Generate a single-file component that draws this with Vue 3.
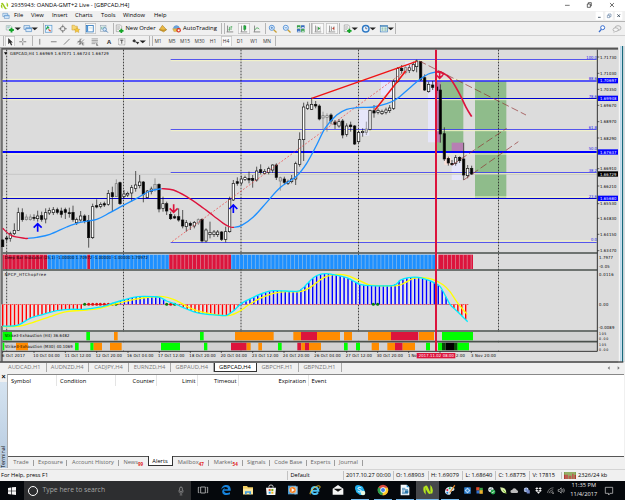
<script setup>
/* ---------- helpers ---------- */
// Turns centre positions into flow margins: [name, centre, width, pressed]
const lay = (items, start = 0) => {
  let end = start
  return items.map(([k, c, w, on]) => {
    const m = c - w / 2 - end
    end = c + w / 2
    return { k, on, style: { marginLeft: m + 'px', width: w + 'px' } }
  })
}
// Turns start positions into cell widths
const cells = (items, last) =>
  items.map(([t, x, extra], i) => ({ t, extra, w: (i + 1 < items.length ? items[i + 1][1] : last) - x + 'px' }))

const smooth = (p) => {
  let d = `M${p[0]},${p[1]}`
  const n = p.length / 2
  const g = (i) => { const j = Math.max(0, Math.min(n - 1, i)); return [p[2 * j], p[2 * j + 1]] }
  for (let i = 0; i < n - 1; i++) {
    const [a, b, c, e] = [g(i - 1), g(i), g(i + 1), g(i + 2)]
    d += `C${b[0] + (c[0] - a[0]) / 6},${b[1] + (c[1] - a[1]) / 6} ${c[0] - (e[0] - b[0]) / 6},${c[1] - (e[1] - b[1]) / 6} ${c[0]},${c[1]}`
  }
  return d
}

/* ---------- icons (30 x 30 box) ---------- */
const I = {
  doc: '<path d="M4 5h14l3 3v11H4z" fill="#eef4ee" stroke="#7a9a9a" stroke-width="1.5"/><path d="M7 9h9M7 12h7" stroke="#59a" stroke-width="1.5"/><path d="M13 19h15M20.500 12v15" stroke="#15a52a" stroke-width="6"/>',
  wins: '<path d="M3 5h18v12H3z" fill="#dcecfb" stroke="#4d86c0" stroke-width="2"/><path d="M9 12h18v12H9z" fill="#dcecfb" stroke="#4d86c0" stroke-width="2"/><path d="M9 12h18v4H9z" fill="#6ea3d8"/>',
  market: '<rect x="4" y="4" width="21" height="22" fill="#eaf3ff" stroke="#4990c8" stroke-width="2"/><path d="M7 17l5-8 4 5" stroke="#22a34a" stroke-width="4" fill="none"/><path d="M14 17l7 6" stroke="#d9542e" stroke-width="4"/>',
  target: '<circle cx="15" cy="15" r="7.500" fill="none" stroke="#555" stroke-width="2"/><path d="M15 2v9M15 19v9M2 15h9M19 15h9" stroke="#555" stroke-width="2"/>',
  folder: '<path d="M3 4h8l2 3h7v12H3z" fill="#f7d774" stroke="#c89a28" stroke-width="1.500"/><path d="M19 11l3 5 6 1-4 4 1 6-6-3-6 3 1-6-4-4 6-1z" fill="#f5c63c" stroke="#b98a1a"/>',
  panel: '<rect x="4" y="5" width="22" height="20" fill="#fff" stroke="#2772b8" stroke-width="2.500"/><path d="M5 6h5v18H5z" fill="#4b91d4"/><path d="M13 11h10M13 15h10" stroke="#9bb" />',
  tester: '<rect x="4" y="4" width="18" height="20" fill="#e9eff6" stroke="#8898a8" stroke-width="1.500"/><path d="M8 17V9M13 19V8M18 14V8" stroke="#5a8" stroke-width="2"/><circle cx="18" cy="17" r="5.500" fill="#d6e8fa" stroke="#457bb5" stroke-width="2"/><path d="M22 21l6 6" stroke="#457bb5" stroke-width="3"/>',
  order: '<path d="M4 3h13l4 4v17H4z" fill="#f3f3f3" stroke="#777" stroke-width="1.500"/><path d="M7 9h9M7 13h9M7 17h6" stroke="#888" stroke-width="1.500"/><path d="M13 22h14M20 15v14" stroke="#12a526" stroke-width="5.500"/>',
  gold: '<path d="M4 18L14 4l13 14-9 7z" fill="#e9b944" stroke="#9c6c12" stroke-width="1.500"/><path d="M4 18l12 2 11-2" stroke="#9c6c12" stroke-width="2" fill="none"/>',
  auto: '<path d="M4 14q2-9 10-9t10 9z" fill="#6aa6e0" stroke="#3a71a8"/><path d="M2 15h24l-4 9H6z" fill="#e8c04d" stroke="#a58020"/><circle cx="21" cy="20" r="7" fill="#d92b1c"/><rect x="18" y="17" width="6" height="6" fill="#fff"/>',
  bars: '<path d="M8 5v19M5 25h21" stroke="#444" stroke-width="1.800" fill="none"/><path d="M14 9v12M11 18h3M19 7v12M19 9h4" stroke="#2a9c3c" stroke-width="2.200" fill="none"/>',
  candle: '<path d="M8 5v19M5 25h21" stroke="#444" stroke-width="1.800"/><path d="M18 3v19" stroke="#146a22" stroke-width="2"/><rect x="15" y="6" width="7" height="11" fill="#1fae3d" stroke="#146a22"/>',
  linec: '<path d="M8 5v19M5 25h21" stroke="#444" stroke-width="1.800"/><path d="M9 19q6-12 14-3" stroke="#2a9c3c" stroke-width="2.200" fill="none"/>',
  zin: '<path d="M18 18l9 9" stroke="#c9a035" stroke-width="4"/><circle cx="12" cy="12" r="8" fill="#e4f1ff" stroke="#3b82cf" stroke-width="2.500"/><path d="M8 12h8M12 8v8" stroke="#2d70bb" stroke-width="2"/>',
  zout: '<path d="M18 18l9 9" stroke="#c9a035" stroke-width="4"/><circle cx="12" cy="12" r="8" fill="#e4f1ff" stroke="#3b82cf" stroke-width="2.500"/><path d="M8 12h8" stroke="#2d70bb" stroke-width="2"/>',
  tile: '<rect x="3" y="4" width="11" height="10" fill="#35a049"/><rect x="16" y="4" width="11" height="10" fill="#2f66bb"/><rect x="3" y="16" width="11" height="10" fill="#2f66bb"/><rect x="16" y="16" width="11" height="10" fill="#35a049"/><path d="M5 11h7M18 11h7M5 23h7M18 23h7" stroke="#e4ecf4" stroke-width="3"/>',
  scroll: '<path d="M8 5v19M5 25h21M13 8v14" stroke="#555" stroke-width="1.800"/><path d="M16 9l7 5-7 5z" fill="#2aa03c"/><path d="M23 8v14" stroke="#555"/>',
  shift: '<path d="M8 5v19M5 25h21M14 8v14" stroke="#555" stroke-width="1.800"/><path d="M23 9l-7 5 7 5z" fill="#d1402e"/><path d="M22 6v16" stroke="#555"/>',
  clock: '<circle cx="15" cy="15" r="12.500" fill="#2d78c4"/><circle cx="15" cy="15" r="8" fill="#eaf5ff"/><path d="M15 9v6h5" stroke="#335" stroke-width="2" fill="none"/>',
  tmpl: '<rect x="4" y="5" width="23" height="20" fill="#e9f4fb" stroke="#3b7db5" stroke-width="2"/><path d="M4 7h23" stroke="#3b7db5" stroke-width="3"/><path d="M8 13h6M17 13h7M8 19h6M17 19h7" stroke="#4a9a6a" stroke-width="2.500"/>',
  caret: '<path d="M5 11h20L15 20z" fill="#222"/>',
  search: '<circle cx="17" cy="11" r="6" fill="#fff" stroke="#3a6fd0" stroke-width="3"/><path d="M13 16l-7 8" stroke="#3a6fd0" stroke-width="4"/>',
  chat: '<ellipse cx="18" cy="12" rx="9" ry="7" fill="#eee" stroke="#999" stroke-width="2"/><ellipse cx="11" cy="17" rx="8" ry="5.500" fill="#f6f6f6" stroke="#999" stroke-width="2"/><path d="M7 21l-2 5 6-4" fill="#f6f6f6" stroke="#999"/>',
  cursor: '<path d="M10 3v20l5-5 4 9 4-2-4-8h6z" fill="#333"/>',
  cross: '<path d="M15 4v9M15 17v9M4 15h9M17 15h9" stroke="#444" stroke-width="2"/>',
  vl: '<path d="M15 6v18" stroke="#444" stroke-width="2"/>',
  hl: '<path d="M6 15h18" stroke="#444" stroke-width="2"/>',
  tl: '<path d="M6 24L24 6" stroke="#444" stroke-width="2"/>',
  chan: '<path d="M4 20L18 5M9 25L25 8M5 14l12 0M10 19h12M13 5v20" stroke="#555" stroke-width="1.800"/><path d="M20 19h6M20 25h6M20 19v6" stroke="#333" stroke-width="1.500"/>',
  fibo: '<path d="M5 6h20M5 11h20M5 16h20M5 21h12" stroke="#666" stroke-width="1.700"/><path d="M21 19v8h5M21 23h4" stroke="#333" stroke-width="1.500" fill="none"/>',
  tbox: '<rect x="5" y="5" width="20" height="20" fill="none" stroke="#555" stroke-width="1.500" stroke-dasharray="2.500 1.500"/><path d="M10 10h10M15 10v11" stroke="#333" stroke-width="2.500"/>',
  arrs: '<path d="M4 13l6-7 6 7-6 4z" fill="#333"/><path d="M15 15l6 9 5-8z" fill="#333"/><path d="M10 14l10 4" stroke="#333" stroke-width="2"/>',
  // taskbar (36 x 36 box)
  task: '<path d="M11 9h14v18H11z" fill="none" stroke="#e8e8e8" stroke-width="2"/><path d="M7 10H4v16h3M29 10h3v16h-3" fill="none" stroke="#e8e8e8" stroke-width="2"/>',
  edge: '<path d="M4 17C5 7 12 3 19 3c9 0 14 7 13 17H12c1 8 11 9 18 5v6C17 37 4 31 7 20c1-4 5-7 9-8-3 2-4 4-4 4h12c0-10-15-9-20 1z" fill="#1683dc"/>',
  files: '<path d="M3 6h12l3 4h15v21H3z" fill="#f3cf63"/><path d="M3 14h30v17H3z" fill="#fbe69b"/><path d="M9 31v-9h18v9h-5v-5h-8v5z" fill="#3d9ae0"/>',
  store: '<path d="M12 11V7q0-4 6-4t6 4v4" fill="none" stroke="#eee" stroke-width="2.500"/><path d="M3 11h30l-2 22H5z" fill="#f5f5f5"/><path d="M11 15h6v6h-6z" fill="#e94e25"/><path d="M19 15h6v6h-6z" fill="#7cb518"/><path d="M11 23h6v6h-6z" fill="#1f9fe4"/><path d="M19 23h6v6h-6z" fill="#f6b511"/>',
  media: '<path d="M3 5h24v26H3z" fill="#4a9cd4"/><path d="M22 7h10v24H22z" fill="#8ec5e8"/><circle cx="17" cy="18" r="10" fill="#f07b1d" stroke="#fbd9b8" stroke-width="1.500"/><path d="M14 12l9 6-9 6z" fill="#fff"/>',
  ie: '<path d="M27 25c-6 9-20 6-19-6 1-13 19-13 20 1H9" fill="none" stroke="#4ec1f1" stroke-width="6"/><path d="M4 31C-2 26 22 1 32 6c2 2 1 5-1 8" fill="none" stroke="#f1c52e" stroke-width="2.800"/>',
  mail: '<path d="M2 14L18 3l16 11v18H2z" fill="#f5f5f5"/><path d="M5 14h26L18 23z" fill="#111"/>',
  skype: '<circle cx="12" cy="12" r="9" fill="#1fb0ee"/><circle cx="22" cy="23" r="10" fill="#1fb0ee"/><circle cx="17" cy="17" r="12" fill="#1fb0ee"/><path d="M22 12c-3-3-10-2-10 1 0 5 10 3 10 8 0 4-8 4-11 0" fill="none" stroke="#fff" stroke-width="3"/><circle cx="27" cy="27" r="7" fill="#e8f7df"/>',
  chrome: '<circle cx="18" cy="18" r="16" fill="#dd4b3e"/><path d="M18 18L4 10a16 16 0 0 0 13 24z" fill="#2ba24c"/><path d="M18 18l-1 16a16 16 0 0 0 15-23H18z" fill="#fccd2c"/><circle cx="18" cy="18" r="8" fill="#fff"/><circle cx="18" cy="18" r="6" fill="#3f7ee8"/>',
  libre: '<path d="M5 2h18l8 8v24H5z" fill="#f4f8fb"/><path d="M23 2l8 8h-8z" fill="#2c92cf"/><path d="M9 13h10M9 17h18M9 21h7M9 25h18M9 29h18" stroke="#2875a8" stroke-width="2.200"/><path d="M18 19h10v8H18z" fill="#2875a8"/>',
  nt: '<path d="M8 7q5-5 9 1l6 14q4 6 6 2-4 10-11 3L10 13z" fill="#b6e61d"/><path d="M6 6q5 4 5 10v16q-11-10-5-26zM30 30q-5-3-5-8V3q12 10 5 27z" fill="#b6e61d"/>',
  paint: '<path d="M3 22Q4 8 20 8c14 0 14 12 6 13-6 0-4 4-6 8-4 7-18 3-17-7z" fill="#d5e8f3"/><circle cx="10" cy="18" r="3" fill="#e13"/><circle cx="17" cy="13" r="3" fill="#2a4"/><circle cx="10" cy="26" r="3" fill="#27c"/><path d="M31 2l3 3-14 20-4 3 1-5z" fill="#e08a2b"/>',
  // tray (30 x 30 box)
  t1: '<rect x="4" y="4" width="22" height="22" rx="2" fill="#2c7fd0"/><circle cx="15" cy="15" r="6" fill="none" stroke="#d6ecff" stroke-width="3"/><path d="M15 6v5M15 19v5M6 15h5M19 15h5" stroke="#d6ecff" stroke-width="2"/>',
  t2: '<path d="M4 4h11v11H4z" fill="#e14b2d"/><path d="M15 6h11v10H15z" fill="#3fa545"/><path d="M5 15h11v10H5z" fill="#2f70d0"/><path d="M15 14h11v12H15z" fill="#eab22d"/>',
  t3: '<circle cx="13" cy="12" r="9" fill="#e8eef0"/><path d="M6 12h8V4" stroke="#355" stroke-width="2" fill="none"/><circle cx="20" cy="20" r="8" fill="#24a34a"/><path d="M16 20l3 3 5-6" stroke="#fff" stroke-width="2.500" fill="none"/>',
  t4: '<path d="M4 4q22 0 20 20Q7 25 4 4z" fill="#d7efa8"/><path d="M14 14l10 11" stroke="#6fb421" stroke-width="3"/>',
  t5: '<path d="M6 23a5 5 0 0 1 1-10q3-8 10-5 4 0 5 5 6 1 5 7-1 3-4 3z" fill="#bbb"/>',
  t6: '<circle cx="14" cy="13" r="8" fill="#c9d7ef"/><path d="M14 5v16M6 13h16" stroke="#3758a8" stroke-width="2"/><path d="M16 14h10v11H16z" fill="#7085c5"/>',
  t7: '<path d="M10 4l5 4-6 4-5-4zM20 4l6 4-5 4-6-4zM4 16l5-4 6 4-5 4zM26 16l-5-4-6 4 5 4zM10 22l5-4 5 4-5 4z" fill="#eee"/>',
  t8: '<path d="M5 23Q8 7 25 6M10 24q2-10 14-12M16 24q1-5 8-6" stroke="#999" stroke-width="2.300" fill="none"/><path d="M21 22h5v4h-5z" fill="#bbb"/>',
  t9: '<path d="M4 12h4l6-6v18l-6-6H4z" fill="none" stroke="#ddd" stroke-width="2"/><path d="M18 11q3 4 0 8M22 8q5 7 0 14" stroke="#ddd" stroke-width="2" fill="none"/>',
}

const main1 = lay([
  ['doc', 10, 10], ['caret', 17.5, 5], ['wins', 28, 10], ['caret', 35, 5], ['|', 43, 1],
  ['market', 49, 10], ['target', 63, 10], ['folder', 76, 10], ['panel', 90, 11, 1], ['tester', 104, 10], ['|', 113, 1],
  ['order', 120, 10], ['#New Order', 140.5, 29], ['gold', 163, 10], ['auto', 177, 10], ['#AutoTrading', 200, 34], ['|', 221, 1], ['|', 224, 1],
  ['bars', 230, 10], ['candle', 243.5, 12, 1], ['linec', 257, 10], ['|', 265, 1], ['zin', 273, 10], ['zout', 287, 10], ['tile', 301, 10],
  ['|', 309.5, 1], ['|', 311, 1], ['scroll', 318, 12, 1], ['shift', 331.5, 12, 1], ['|', 339, 1],
  ['order', 348, 10], ['caret', 355, 5], ['clock', 366, 10], ['caret', 373, 5], ['tmpl', 384, 10], ['caret', 391, 5], ['|', 395, 1],
])
const main2 = lay([
  ['|', 3, 1], ['cursor', 9.5, 10, 1], ['cross', 23, 10], ['|', 32, 1], ['vl', 40, 10], ['hl', 54, 10], ['tl', 67, 10], ['chan', 81, 10],
  ['fibo', 95, 10], ['#A', 109, 6], ['tbox', 122, 10], ['arrs', 136, 10], ['caret', 143, 5], ['|', 149.5, 1], ['|', 152, 1],
  ['~M1', 158, 10], ['~M5', 172, 10], ['~M15', 185, 12], ['~M30', 199.5, 12], ['~H1', 213, 10], ['~H4', 226, 11, 1], ['~D1', 240, 10],
  ['~W1', 254, 10], ['~MN', 267, 10], ['|', 275, 1],
])
const menu = cells([['File', 14], ['View', 31], ['Insert', 52], ['Charts', 75], ['Tools', 101], ['Window', 123], ['Help', 154]], 180)
const chartTabs = [['AUDCAD,H1', 46.5], ['AUDNZD,H4', 42.5], ['CADJPY,H4', 40], ['EURNZD,H4', 42], ['GBPAUD,H4', 42.5], ['GBPCAD,H4', 43, 1], ['GBPCHF,H1', 42], ['GBPNZD,H1', 43]]
const head = [['Symbol', 49], ['Condition', 59], ['Counter', 41, 1], ['Limit', 41, 1], ['Timeout', 41, 1], ['Expiration', 69.5, 1], ['Event', 200]]
const termTabs = [['Trade', 26], ['Exposure', 33], ['Account History', 52], ['News', 28.5, 99], ['Alerts', 25], ['Mailbox', 36.5, 47], ['Market', 33.5, 54], ['Signals', 27.5], ['Code Base', 36.5], ['Experts', 28], ['Journal', 28]]
const status = cells([['For Help, press F1', 0], ['Default', 287], ['2017.10.27 00:00', 342.5], ['O: 1.68903', 392.5], ['H: 1.69079', 427.5], ['L: 1.68640', 462], ['C: 1.68775', 495], ['V: 17815', 529]], 561)
const apps = ['task', 'edge', 'files', 'store', 'media', 'ie', 'mail', 'skype', 'chrome', 'libre', 'nt', 'paint']
const tray = ['t1', 't2', 't3', 't4', 't5', 't6', 't7', 't8', 't9']

/* ---------- chart data: x, high, low, body top, body bottom, kind (1 = bear, 0 = bull, 2 = grey) ---------- */
const raw = `8 583 606 585 605 1|20 573 590 579 582 1|31 560 590 566 580 0|43 535 570 556 566 0|55 488 556 503 556 0|67 490 530 503 524 1|79 508 527 516 524 2|91 508 527 516 524 2|102 508 527 517 520 1|113 497 530 513 521 0|125 500 530 512 523 1|137 490 535 503 522 0|148 488 510 496 504 0|160 486 510 494 503 0|172 488 508 494 502 1|184 488 518 498 508 1|196 488 522 494 502 1|208 488 518 503 506 1|219 482 530 502 524 1|230 518 540 524 533 0|242 498 530 513 525 0|254 508 535 513 527 1|266 510 608 526 578 1|278 476 582 485 578 0|290 463 490 482 486 1|302 472 490 478 484 0|313 470 486 476 480 1|325 435 482 445 478 0|337 425 500 443 455 1|349 403 456 416 455 2|360 410 480 413 476 1|372 435 460 447 455 0|383 440 456 445 450 0|395 420 470 428 444 0|407 378 440 420 430 0|419 390 430 411 422 0|430 408 472 411 448 1|442 435 460 438 458 0|454 425 448 432 440 0|465 400 440 418 432 2|477 415 502 418 492 1|489 455 500 476 490 0|500 470 510 476 498 1|512 500 525 508 521 1|524 508 522 515 519 1|536 490 530 515 525 1|548 495 550 525 543 1|559 525 560 533 545 0|571 530 555 535 541 1|583 528 550 532 543 0|595 520 540 524 534 2|606 520 592 523 588 1|618 550 592 555 588 0|630 530 580 562 569 0|642 555 576 561 569 0|653 555 576 561 569 0|665 558 588 561 583 1|677 545 592 560 583 0|689 455 563 464 560 0|700 405 468 415 465 0|712 397 422 410 415 1|724 392 420 402 414 0|735 392 408 398 403 0|747 380 415 400 405 1|758 390 428 400 406 1|770 365 410 378 405 0|782 358 388 374 382 1|794 372 388 379 385 0|806 365 388 371 382 0|818 358 384 360 375 0|829 355 405 360 397 1|841 395 437 398 408 2|853 395 420 402 412 1|864 404 420 410 415 0|875 390 415 402 410 0|887 350 420 356 402 0|899 262 365 284 358 0|911 173 348 186 284 0|923 170 195 180 190 0|935 158 195 178 193 0|947 168 190 178 183 1|958 178 226 183 222 1|969 200 255 212 219 2|981 205 260 212 217 2|993 205 238 210 228 1|1005 225 252 231 238 1|1017 222 248 230 243 0|1028 222 280 228 270 1|1040 235 275 243 268 0|1052 230 260 240 245 1|1064 240 300 243 297 1|1076 258 294 262 290 0|1088 250 275 259 263 0|1099 230 270 252 262 2|1110 194 256 196 253 0|1122 180 218 197 204 1|1134 190 208 196 202 0|1146 194 210 199 206 0|1158 188 208 195 202 0|1169 180 204 189 197 0|1181 103 195 110 190 0|1193 66 114 70 110 0|1205 60 86 70 77 1|1217 60 88 68 82 2|1228 60 84 68 76 0|1240 50 80 58 76 0|1250 44 82 48 65 0|1262 48 108 50 103 1|1274 88 138 98 135 1|1286 110 143 118 140 0|1298 108 135 120 127 1|1310 112 145 126 136 1|1321 118 293 135 267 1|1333 247 348 266 342 1|1345 335 362 340 354 1|1356 345 362 355 359 1|1367 330 362 338 355 0|1379 334 354 337 347 1|1391 293 405 342 390 1|1403 360 400 370 392 0|1415 362 390 370 387 1`
const candles = raw.split('|').map((r) => r.split(' ').map(Number))
const maRed = smooth([8, 550, 35, 572, 75, 580, 84, 580])
const maBlue = smooth([84, 580, 110, 577, 150, 568, 200, 546, 240, 532, 290, 523, 330, 503, 370, 481, 410, 460, 450, 438, 485, 431])
const maRed2 = smooth([485, 431, 520, 435, 560, 455, 600, 482, 640, 512, 670, 535, 690, 546, 702, 547])
const maBlue2 = smooth([702, 547, 725, 541, 760, 516, 800, 472, 840, 428, 890, 393, 920, 355, 950, 300, 975, 250, 1010, 210, 1040, 193, 1070, 188, 1120, 186, 1160, 176, 1190, 162, 1230, 128, 1260, 103, 1285, 87, 1310, 80])
const maRed3 = smooth([1310, 80, 1330, 85, 1350, 100, 1375, 140, 1400, 190, 1415, 215])
const fast = [8, 843, 40, 843, 60, 838, 90, 820, 130, 808, 170, 797, 210, 793, 250, 793, 275, 790, 310, 784, 340, 774, 370, 765, 400, 757, 430, 754, 460, 755, 480, 757, 500, 768, 530, 779, 560, 792, 590, 803, 630, 809, 660, 811, 680, 811, 700, 798, 725, 775, 760, 757, 790, 744, 820, 737, 890, 739, 905, 732, 920, 718, 940, 698, 960, 688, 980, 686, 1000, 689, 1040, 698, 1060, 708, 1080, 718, 1110, 722, 1180, 721, 1200, 706, 1225, 698, 1255, 697, 1280, 704, 1300, 712, 1320, 724, 1335, 750, 1350, 778, 1365, 793, 1385, 812, 1403, 830]
const slow = [8, 845, 60, 843, 100, 832, 150, 815, 200, 800, 260, 795, 300, 790, 350, 776, 400, 764, 450, 756, 490, 755, 520, 763, 550, 778, 590, 797, 650, 810, 690, 811, 720, 798, 745, 780, 780, 760, 820, 745, 860, 740, 900, 740, 930, 728, 960, 705, 980, 694, 1010, 688, 1040, 691, 1070, 703, 1100, 717, 1120, 721, 1190, 722, 1215, 713, 1240, 700, 1270, 698, 1300, 704, 1330, 720, 1350, 740, 1370, 770, 1390, 795, 1402, 808]
const at = (x) => {
  for (let i = 0; i < fast.length - 2; i += 2)
    if (x <= fast[i + 2]) return fast[i + 1] + ((x - fast[i]) / (fast[i + 2] - fast[i])) * (fast[i + 3] - fast[i + 1])
  return 830
}
const hist = []
const stripes = []
for (let i = 0; i < 120; i++) {
  const x = 8 + i * 11.77
  if (!(x > 245 && x < 355) && !(x > 495 && x < 530) && x < 1406) hist.push([x, at(x)])
  if (x < 1300 || x > 1320) stripes.push(x + 3.5)
}
const deep = [[8, 142, 0], [142, 262, 1], [262, 270, 0], [270, 507, 1], [507, 693, 0], [693, 1305, 1], [1315, 1419, 0]]
const G = '#00ff00', O = '#ff8c00', C = '#dc143c', D = '#064f06', K = '#000'
const s1 = [[8, 36, G], [259, 270, G], [342, 353, O], [600, 611, G], [705, 821, O], [880, 903, O], [903, 951, C], [951, 1020, O], [1032, 1056, O], [1104, 1173, O], [1173, 1255, C], [1257, 1302, O], [1326, 1419, G]]
const s2 = [[8, 13, G], [48, 84, O], [225, 236, G], [271, 281, G], [281, 306, O], [330, 365, O], [483, 540, G], [612, 622, G], [693, 740, C], [740, 752, O], [775, 786, O], [834, 845, G], [892, 904, C], [904, 915, O], [915, 927, C], [927, 963, O], [1032, 1043, G], [1068, 1080, G], [1115, 1137, O], [1162, 1185, O], [1185, 1208, C], [1208, 1245, O], [1278, 1290, G], [1314, 1326, G], [1326, 1337, D], [1337, 1362, K], [1362, 1373, D], [1373, 1407, G]]
const fibs = [['100.0', 43], ['88.6', 107], ['78.6', 160], ['61.8', 253], ['50.0', 317], ['38.2', 382], ['23.6', 460], ['0.0', 590]]
const prices = [['1.71730', 36], ['1.71030', 85], ['1.70350', 133], ['1.69670', 181], ['1.68970', 230], ['1.68290', 279], ['1.66910', 371], ['1.66210', 423], ['1.65530', 476], ['1.64830', 520], ['1.64150', 568], ['1.63470', 617]]
const marks = [['1.70697', 107], ['1.69948', 160], ['1.67637', 321], ['1.65680', 460], ['1.66729', 387, 1]]
const times = [['10 Oct 04:00', 100], ['11 Oct 12:00', 194], ['12 Oct 20:00', 287], ['16 Oct 04:00', 381], ['17 Oct 12:00', 474], ['18 Oct 20:00', 568], ['20 Oct 04:00', 662], ['23 Oct 12:00', 756], ['24 Oct 20:00', 849], ['26 Oct 04:00', 943], ['27 Oct 12:00', 1037], ['30 Oct 20:00', 1130]]
const dots = [[254, 1], [266], [278], [290], [301], [313], [325], [337], [348, 1], [500, 1], [512], [524, 1], [1120, 1], [1133, 1]]
</script>

<template>
  <div class="screen">
    <header class="title">
      <svg class="logo" viewBox="0 0 30 30"><path d="M3 9q5-6 9 1l7 12q3 6 8 0-5 10-12 3L9 14q-3-5-6-5z" fill="#9ccb1c" /><path d="M4 11q4 2 4 7v8Q0 20 4 11zM26 20q-4-2-4-6V4q8 7 4 16z" fill="#9ccb1c" /></svg>
      <span class="name">2935943: OANDA-GMT+2 Live - [GBPCAD,H4]</span>
      <svg class="ctl" viewBox="0 0 160 33"><path d="M6 16h14" stroke="#333" stroke-width="2" /><path d="M73 12h9v10h-9zM76 12V8h9v10h-3" fill="none" stroke="#222" stroke-width="2" /><path d="M141 9l12 12M153 9l-12 12" stroke="#222" stroke-width="2" /></svg>
    </header>

    <nav class="menu">
      <svg class="mico" viewBox="0 0 30 30" v-html="I.wins"></svg>
      <span v-for="m in menu" :key="m.t" :style="{ width: m.w }">{{ m.t }}</span>
      <svg class="mctl" viewBox="0 0 84 30"><path d="M2 2h22v24H2zM31 2h22v24H31zM60 2h22v24H60z" fill="#fff" /><path d="M9 19h8" stroke="#345" stroke-width="2.500" /><path d="M37 13h7v7h-7zM40 13V9h8v8h-4" fill="none" stroke="#5b7ba0" stroke-width="1.800" /><path d="M67 10l8 8M75 10l-8 8" stroke="#345" stroke-width="2.500" /></svg>
    </nav>

    <div class="bar one">
      <div class="row">
        <div v-for="(b, i) in main1" :key="i" class="cell" :class="{ on: b.on, sep: b.k === '|' }" :style="b.style">
          <span v-if="b.k[0] === '#'">{{ b.k.slice(1) }}</span>
          <svg v-else-if="b.k !== '|'" viewBox="0 0 30 30" v-html="I[b.k]"></svg>
        </div>
      </div>
      <svg class="far" viewBox="0 0 30 30" v-html="I.search"></svg>
      <svg class="chat" viewBox="0 0 30 30" v-html="I.chat"></svg>
    </div>
    <div class="bar two">
      <div class="row">
        <div v-for="(b, i) in main2" :key="i" class="cell" :class="{ on: b.on, sep: b.k === '|' }" :style="b.style">
          <b v-if="b.k[0] === '#'">{{ b.k.slice(1) }}</b>
          <small v-else-if="b.k[0] === '~'">{{ b.k.slice(1) }}</small>
          <svg v-else-if="b.k !== '|'" viewBox="0 0 30 30" v-html="I[b.k]"></svg>
        </div>
      </div>
    </div>

    <svg class="chart" viewBox="0 3 1875 951">
      <rect y="3" width="1875" height="951" fill="#f0f0f0" />
      <rect y="6" width="1855" height="947" fill="#a8a8a8" />
      <rect x="4" y="9" width="1851" height="941" fill="#555" />
      <rect x="8" y="14" width="1847" height="936" fill="#dcdcdc" />
      <rect x="1855" y="3" width="5" height="948" fill="#f4f4f4" />
      <rect x="1860" y="3" width="5" height="948" fill="#b9d7ea" />
      <rect x="1866" y="3" width="4" height="948" fill="#17697c" />
      <rect x="1870" y="3" width="5" height="948" fill="#d9dde0" />
      <rect y="949" width="1870" height="4" fill="#444" />

      <!-- zones -->
      <g fill="#e6e6fa">
        <rect x="1077" y="195" width="31" height="77" /><rect x="1143" y="103" width="38" height="48" />
        <rect x="1284" y="107" width="26" height="185" /><rect x="1355" y="350" width="30" height="55" /><rect x="1215" y="50" width="24" height="20" />
      </g>
      <rect x="1311" y="108" width="79" height="210" fill="#8fbc8b" />
      <rect x="1425" y="108" width="94" height="352" fill="#8fbc8b" />
      <rect x="1311" y="108" width="11" height="184" fill="#b77fb3" />
      <rect x="1355" y="293" width="35" height="27" fill="#b77fb3" />
      <path d="M1262 106h12v30h-12zM1333 335h20v24h-20z" fill="#fbe0d8" />

      <!-- levels -->
      <path d="M512 47H1790M512 257H1790M512 386H1790M512 588H1790M8 103H1790M8 164H1790M8 327H1790M8 456H1790" stroke="#f4f4c4" stroke-width="3" />
      <path d="M8 388H1790" stroke="#bcbcbc" stroke-width="2" />
      <path d="M512 43.500H1790M512 253.500H1790M512 382.500H1790M512 592.500H1790" stroke="#3a3af0" stroke-width="2.500" />
      <path d="M8 108H1790" stroke="#2a2aff" stroke-width="4.500" />
      <path d="M8 160.500H1790M8 460.500H1790" stroke="#0000d0" stroke-width="3.500" />
      <path d="M8 321H1790" stroke="#0000ff" stroke-width="6" />

      <path d="M20 14V919M370.500 14V919M723 14V919M1075.500 14V919M1495.500 14V919" stroke="#222" stroke-width="2.500" stroke-dasharray="5 4" />

      <!-- candles -->
      <g v-for="c in candles" :key="c[0]" :stroke="c[5] === 2 ? '#777' : '#111'" stroke-width="2">
        <path :d="`M${c[0]} ${c[1]}V${c[2]}`" />
        <rect :x="c[0] - 3.5" :y="c[3]" width="7" :height="c[4] - c[3]" :fill="c[5] === 1 ? '#000' : c[5] === 2 ? '#ccc' : '#fff'" />
      </g>

      <path d="M516 590L1240 60" stroke="#f03c3c" stroke-width="2" stroke-dasharray="6 5" />
      <g fill="none" stroke-width="4">
        <path :d="maRed" stroke="#dc143c" /><path :d="maBlue" stroke="#1e90ff" /><path :d="maRed2" stroke="#dc143c" />
        <path :d="maBlue2" stroke="#1e90ff" /><path :d="maRed3" stroke="#dc143c" stroke-width="5" />
      </g>
      <path d="M935 160L1250 49M1125 195L1217 78" stroke="#f01414" stroke-width="4.500" />
      <path d="M1258 48L1578 210M1356 360L1520 250M1391 405L1555 290" stroke="#8f2f2f" stroke-width="2" stroke-dasharray="22 9" />

      <g fill="none" stroke-width="5">
        <path d="M113 560V538M101 548L113 536L125 548M700 504V481M688 492L700 480L712 492" stroke="#0000ff" />
        <path d="M521 478V500M509 490L521 502L533 490" stroke="#dc143c" />
        <path d="M1319 80V98M1309 90L1319 100L1329 90M1310 80Q1328 78 1330 90" stroke="#dc143c" stroke-width="4.500" />
      </g>

      <!-- indicator panels -->
      <rect x="8" y="861" width="1784" height="26" fill="#d2d2d2" /><rect x="8" y="893" width="1784" height="24" fill="#d2d2d2" />
      <rect v-for="d in deep" :key="d[0]" :x="d[0]" y="629" :width="d[1] - d[0]" height="43" :fill="d[2] ? '#1e90ff' : '#dc143c'" />
      <rect v-for="x in stripes" :key="x" :x="x" y="629" width="2.500" height="43" fill="#dcdcdc" opacity=".5" />
      <path d="M8 778.500H1405" stroke="#e02020" stroke-width="2" />
      <g v-for="h in hist" :key="h[0]">
        <rect :x="h[0] - 4" :y="Math.min(778, h[1])" width="8" :height="Math.abs(778 - h[1])" fill="#f6f6f6" />
        <rect :x="h[0] - 2" :y="Math.min(778, h[1])" width="4.500" :height="Math.abs(778 - h[1])" :fill="h[1] > 778 ? '#ff0000' : '#0000ff'" />
      </g>
      <circle v-for="d in dots" :key="d[0]" :cx="d[0]" cy="778" r="4.500" :fill="d[1] ? '#0a7a0a' : '#e01010'" />
      <path :d="smooth(slow)" fill="none" stroke="#ffff00" stroke-width="4" />
      <path :d="smooth(fast)" fill="none" stroke="#00ecff" stroke-width="4" />
      <rect v-for="s in s1" :key="'a' + s[0]" :x="s[0]" y="861" :width="s[1] - s[0]" height="25" :fill="s[2]" />
      <rect v-for="s in s2" :key="'b' + s[0]" :x="s[0]" y="893" :width="s[1] - s[0]" height="23" :fill="s[2]" />

      <path d="M8 624H1792M8 675H1792M8 858H1792M8 890H1792" stroke="#4a504c" stroke-width="5" />
      <path d="M8 919H1792M1792 14V919" stroke="#333" stroke-width="3" />
      <path d="M1308 14V919" stroke="#dc143c" stroke-width="6" />

      <!-- captions -->
      <path d="M12 22h10l-5 7z" fill="#000" />
      <g class="cap">
        <text x="30" y="30" textLength="296">GBPCAD,H4  1.66969 1.67071 1.66724 1.66729</text>
        <text x="14" y="643" textLength="430">Deep Bar Indicator (25,1) -1.00000 1.70972 -1.00000 -1.00000 1.70972</text>
        <text x="14" y="694" textLength="124">NPCP_HTChopFree</text>
        <text x="14" y="876" textLength="194">Strike3-Exhaustion (H4) 36.6482</text>
        <text x="14" y="908" textLength="204">Strike3-Exhaustion (M30) 40.1069</text>
        <text x="6" y="937" textLength="69">6 Oct 2017</text>
        <text v-for="t in times" :key="t[0]" :x="t[1]" y="937" textLength="79">{{ t[0] }}</text>
        <text x="1224" y="937" textLength="26">1 No</text>
        <text x="1368" y="937" textLength="27">2:00</text>
        <text x="1413" y="937" textLength="75">3 Nov 20:00</text>
      </g>
      <path d="M8 919v5M102 919v5M196 919v5M290 919v5M384 919v5M478 919v5M571 919v5M664 919v5M758 919v5M852 919v5M946 919v5M1040 919v5M1133 919v5M1226 919v5M1320 919v5M1414 919v5" stroke="#222" stroke-width="2" />
      <rect x="1250" y="924" width="116" height="16" fill="#dc143c" />
      <text class="cap hl" x="1256" y="937" textLength="106">2017.11.02 08:00</text>

      <g class="fib">
        <text v-for="f in fibs" :key="f[0]" x="1791" :y="f[1] - 2" text-anchor="end">{{ f[0] }}</text>
      </g>
      <g v-for="p in prices" :key="p[0]">
        <path :d="`M1792 ${p[1]}h6`" stroke="#222" stroke-width="2" />
        <text class="cap" x="1800" :y="p[1] + 5" textLength="49">{{ p[0] }}</text>
      </g>
      <g v-for="m in marks" :key="m[0]">
        <rect x="1794" :y="m[1] - 8" width="60" height="16" :fill="m[2] ? '#000' : '#0000ff'" />
        <text class="cap hl" x="1800" :y="m[1] + 5" textLength="49">{{ m[0] }}</text>
      </g>
      <g class="cap">
        <text x="1797" y="641" textLength="42">1.7977</text><text x="1797" y="670" textLength="32">-0.05</text>
        <text x="1797" y="693" textLength="44">0.0116</text><text x="1797" y="784" textLength="28">0.00</text><text x="1796" y="851" textLength="47">-0.0089</text>
      </g>
      <g class="cap tiny">
        <text x="1797" y="871" textLength="22">105</text><text x="1797" y="885" textLength="28">0.00</text>
        <text x="1797" y="904" textLength="22">105</text><text x="1797" y="918" textLength="28">0.00</text>
      </g>
    </svg>

    <div class="ctabs">
      <span v-for="t in chartTabs" :key="t[0]" :class="{ act: t[2] }" :style="{ width: t[1] + 'px' }">{{ t[0] }}</span>
      <svg viewBox="0 0 60 30"><path d="M17 10v10l-6-5zM41 10v10l6-5z" fill="#777" /></svg>
    </div>

    <section class="term">
      <aside><i>×</i><b>Terminal</b></aside>
      <div class="pane">
        <div class="head">
          <span v-for="h in head" :key="h[0]" :class="{ r: h[2] }" :style="{ width: h[1] + 'px' }">{{ h[0] }}</span>
        </div>
        <div class="tabs">
          <span v-for="t in termTabs" :key="t[0]" :class="{ act: t[0] === 'Alerts', nb: t[0] === 'News' }" :style="{ width: t[1] + 'px' }">{{ t[0] }}<sub v-if="t[2]">{{ t[2] }}</sub></span>
        </div>
      </div>
    </section>

    <footer class="status">
      <span v-for="s in status" :key="s.t" :style="{ width: s.w }">{{ s.t }}</span>
      <div class="net">
        <svg viewBox="0 0 36 21"><path d="M0 0h36v21H0z" fill="#7ea24e" /><path d="M0 8h12v13H0zM14 11h8v10h-8zM24 5h5v16h-5zM31 9h5v12h-5z" fill="#b03a32" /><path d="M6 0v21M12 0v21M18 0v21M24 0v21M30 0v21" stroke="#e5dcc0" stroke-width="1.300" /></svg>
        2326/24 kb
      </div>
    </footer>

    <div class="task">
      <div class="start"><svg viewBox="0 0 24 24"><path d="M0 3l10-1.500v10H0zM12 1l12-1v11.500H12zM0 13h10v9.500L0 21zM12 13h12v11l-12-1.500z" fill="#f4f4f4" /></svg></div>
      <div class="find">
        <i></i><span>Type here to search</span>
        <svg viewBox="0 0 24 30"><rect x="8" y="3" width="8" height="15" rx="4" fill="none" stroke="#bbb" stroke-width="1.800" /><path d="M5 13q0 9 7 9t7-9M12 22v5M8 27h8" fill="none" stroke="#999" stroke-width="1.600" /></svg>
      </div>
      <div class="apps">
        <div v-for="(a, i) in apps" :key="a" :class="{ run: i > 6, cur: a === 'nt' }"><svg viewBox="0 0 36 36" v-html="I[a]"></svg></div>
      </div>
      <div class="tray"><svg v-for="t in tray" :key="t" viewBox="0 0 30 30" v-html="I[t]"></svg></div>
      <div class="clock"><span>11:35 PM</span><span>11/4/2017</span></div>
      <svg class="note" viewBox="0 0 30 30"><path d="M4 4h22v18H18l-4 5v-5H4z" fill="none" stroke="#ddd" stroke-width="2" /></svg>
    </div>
  </div>
</template>

<style>
body { margin: 0; overflow: hidden; background: #f0f0f0; }
</style>
<style scoped>
.screen { width: 625px; height: 500px; display: flex; flex-direction: column; overflow: hidden; background: #f0f0f0; font: 5.8px/1 "Open Sans", "Noto Sans", sans-serif; color: #000; white-space: nowrap; }
.screen svg { display: block; flex: none; }
.title { height: 11px; background: #fff; display: flex; align-items: center; }
.logo { width: 9px; height: 9px; margin-right: 2px; }
.name { flex: 1; font-size: 5.7px; }
.ctl { width: 53.300px; height: 11px; margin-right: 9px; }
.menu { height: 11px; display: flex; align-items: center; border-bottom: 1px solid #b4b4b4; box-sizing: border-box; }
.mico { width: 8px; height: 8px; margin: 0 4px 0 2px; }
.mctl { width: 28px; height: 10px; margin-left: auto; margin-right: 2px; }
.bar { display: flex; align-items: center; height: 13px; }
.bar svg { width: 10px; height: 10px; }
.bar .far { margin-left: auto; margin-right: 5px; }
.bar .chat { margin-right: 3px; }
.bar .row { display: flex; height: 100%; align-items: center; }
.cell { flex: none; height: 11px; display: flex; align-items: center; justify-content: center; box-sizing: border-box; }
.bar .cell svg { width: 9.500px; height: 9.500px; }
.cell.on { background: #f9f9f9; box-shadow: inset 0 0 0 .7px #c0c0c0; }
.cell.sep { background: #b5b5b5; height: 11px; }
.cell span { font-size: 5.9px; }
.cell b { font-size: 6px; color: #333; }
.cell small { font-size: 4.900px; color: #333; }
.one { border-bottom: 1px solid #d0d0d0; }
.two { height: 11px; }
.chart { width: 625px; height: 317px; margin-top: -1px; }
.cap { font-family: "DejaVu Sans Condensed", "DejaVu Sans", sans-serif; font-stretch: condensed; font-size: 12.500px; fill: #000; }
.cap.tiny { font-size: 10.500px; }
.cap.hl { fill: #fff; }
.fib { font-family: "DejaVu Sans Condensed", "DejaVu Sans", sans-serif; font-stretch: condensed; font-size: 12.500px; fill: #1a1aee; }
.ctabs { height: 11px; display: flex; align-items: flex-start; color: #777; }
.ctabs span { height: 9px; line-height: 9px; text-align: center; box-sizing: border-box; border-right: 1px solid #aaa; font-size: 5.750px; }
.ctabs span:first-child { padding-left: 3px; }
.ctabs .act { background: #fff; color: #000; border: 1px solid #333; border-top: 0; }
.ctabs svg { width: 20px; height: 10px; margin-left: auto; margin-right: 1px; }
.term { height: 94px; display: flex; }
.term aside { width: 7px; display: flex; flex-direction: column; justify-content: space-between; background: linear-gradient(#f0f0f0 8px, #d5e3f0 8px, #b7cbe0 92px); }
.term aside i { font: bold 7px/6px "Liberation Sans", sans-serif; text-align: center; }
.term aside b { writing-mode: vertical-rl; transform: rotate(180deg); font-weight: 400; font-size: 5.300px; line-height: 7px; }
.pane { flex: 1; background: #fff; border-top: 1px solid #888; border-left: 1px solid #aaa; box-sizing: border-box; display: flex; flex-direction: column; justify-content: space-between; margin-right: 1px; }
.head { display: flex; height: 11px; }
.head span { box-sizing: border-box; height: 11px; line-height: 12px; padding: 0 3px; border-right: 1px solid #e4e4e4; }
.head span:last-child { border: 0; }
.head .r { text-align: right; padding-right: 1.500px; }
.tabs { display: flex; height: 11px; background: #f0f0f0; border-top: 1px solid #555; color: #666; }
.tabs span { box-sizing: border-box; height: 9px; line-height: 10px; text-align: center; background: linear-gradient(#888, #888) right 3px/.8px 6px no-repeat; font-size: 5.700px; }
.tabs .nb { background: none; }
.tabs .act { background: #fff; border: 1px solid #333; border-top: 0; color: #000; margin-top: -1px; height: 10px; line-height: 11px; }
.tabs sub { color: #e02020; font-size: 4.500px; line-height: 0; vertical-align: -2px; font-weight: 700; }
.status { height: 12px; display: flex; align-items: center; border-top: 1px solid #d4d4d4; margin-top: 1px; box-sizing: border-box; font-size: 5.650px; }
.status span { box-sizing: border-box; padding-left: 2.500px; height: 9px; line-height: 9px; border-left: 1px solid #c2c2c2; }
.status span:first-child { padding-left: 1px; border: 0; }
.net { display: flex; align-items: center; border-left: 1px solid #c2c2c2; padding-left: 2px; gap: 2px; }
.net svg { width: 12px; height: 7px; }
.task { flex: 1; background: #05080c; display: flex; align-items: stretch; color: #eee; }
.start { width: 24px; display: flex; align-items: center; justify-content: center; }
.start svg { width: 8px; height: 8px; }
.find { width: 167px; background: #2d2e30; display: flex; align-items: center; color: #a6a6a6; font-size: 6.800px; }
.find i { width: 8px; height: 8px; border: 1.500px solid #fff; border-radius: 50%; margin: 0 4.500px 0 4px; }
.find svg { width: 8px; height: 10px; margin-left: auto; margin-right: 6px; }
.apps { display: flex; margin-left: 1px; }
.apps div { width: 22.440px; box-sizing: border-box; display: flex; align-items: center; justify-content: center; border-bottom: 1px solid transparent; }
.apps svg { width: 12px; height: 12px; }
.apps .run { background: linear-gradient(#76b9ed, #76b9ed) center bottom/18px 1px no-repeat border-box; }
.apps .cur { background: linear-gradient(#76b9ed, #76b9ed) bottom/100% 1px no-repeat border-box, #46484b; }
.tray { display: flex; align-items: center; gap: 2.750px; margin-left: 2px; }
.tray svg { width: 9px; height: 9px; }
.clock { width: 33px; margin-left: 1px; display: flex; flex-direction: column; align-items: center; justify-content: center; gap: 3px; font-size: 5.700px; }
.note { width: 10px; height: 10px; align-self: center; margin-left: 4px; }
</style>
